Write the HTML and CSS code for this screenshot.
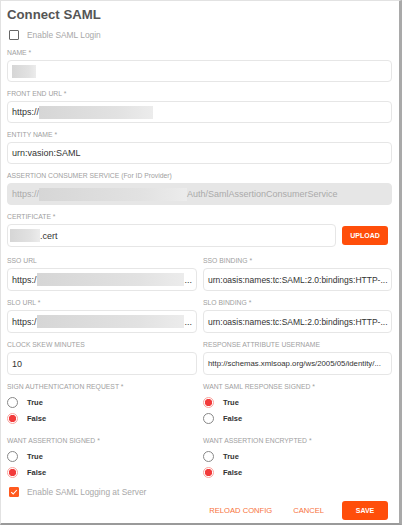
FILE: index.html
```html
<!DOCTYPE html>
<html lang="en">
<head>
  <meta charset="UTF-8" />
  <meta name="viewport" content="width=device-width, initial-scale=1" />
  <title>Connect SAML</title>
  <link rel="stylesheet" href="styles.css">
</head>
<body>
  <div class="dialog">
    <h1>Connect SAML</h1>

    <label class="check">
      <span class="box"></span>
      <span>Enable SAML Login</span>
    </label>

    <div class="field">
      <label>NAME *</label>
      <div class="input"><span class="mask" style="width:24px"></span></div>
    </div>

    <div class="field">
      <label>FRONT END URL *</label>
      <div class="input">https://<span class="mask" style="width:114px"></span></div>
    </div>

    <div class="field">
      <label>ENTITY NAME *</label>
      <div class="input">urn:vasion:SAML</div>
    </div>

    <div class="field">
      <label>ASSERTION CONSUMER SERVICE (For ID Provider)</label>
      <div class="input disabled">https://<span class="mask" style="width:148px"></span>Auth/SamlAssertionConsumerService</div>
    </div>

    <div class="field">
      <label>CERTIFICATE *</label>
      <div class="upload-row">
        <div class="input"><span class="mask" style="width:30px;margin-left:-2px"></span>.cert</div>
        <button class="btn">UPLOAD</button>
      </div>
    </div>

    <div class="grid">
      <div class="field">
        <label>SSO URL</label>
        <div class="input">https:/<span class="mask" style="width:150px"></span>...</div>
      </div>
      <div class="field">
        <label>SSO BINDING *</label>
        <div class="input binding">urn:oasis:names:tc:SAML:2.0:bindings:HTTP-...</div>
      </div>
      <div class="field">
        <label>SLO URL *</label>
        <div class="input">https:/<span class="mask" style="width:150px"></span>...</div>
      </div>
      <div class="field">
        <label>SLO BINDING *</label>
        <div class="input binding">urn:oasis:names:tc:SAML:2.0:bindings:HTTP-...</div>
      </div>
      <div class="field">
        <label>CLOCK SKEW MINUTES</label>
        <div class="input">10</div>
      </div>
      <div class="field">
        <label>RESPONSE ATTRIBUTE USERNAME</label>
        <div class="input small">http://schemas.xmlsoap.org/ws/2005/05/identity/...</div>
      </div>
    </div>

    <div class="grid radios">
      <div class="group">
        <label>SIGN AUTHENTICATION REQUEST *</label>
        <div class="radio"><span class="dot"></span>True</div>
        <div class="radio"><span class="dot on"></span>False</div>
      </div>
      <div class="group">
        <label>WANT SAML RESPONSE SIGNED *</label>
        <div class="radio"><span class="dot on"></span>True</div>
        <div class="radio"><span class="dot"></span>False</div>
      </div>
      <div class="group">
        <label>WANT ASSERTION SIGNED *</label>
        <div class="radio"><span class="dot"></span>True</div>
        <div class="radio"><span class="dot on"></span>False</div>
      </div>
      <div class="group">
        <label>WANT ASSERTION ENCRYPTED *</label>
        <div class="radio"><span class="dot"></span>True</div>
        <div class="radio"><span class="dot on"></span>False</div>
      </div>
    </div>

    <label class="check logging">
      <span class="box checked">
        <svg viewBox="0 0 10 10" width="8" height="8"><path d="M1.5 5.2 L4 7.5 L8.5 2.5" fill="none" stroke="#fff" stroke-width="1.4"/></svg>
      </span>
      <span>Enable SAML Logging at Server</span>
    </label>

    <div class="actions">
      <button class="link reload">RELOAD CONFIG</button>
      <button class="link">CANCEL</button>
      <button class="btn">SAVE</button>
    </div>
  </div>
</body>
</html>
```

FILE: styles.css
```css
body {
  margin: 0;
  font-family: "Liberation Sans", Arial, sans-serif;
  background: #fff;
}
.dialog {
  width: 385px;
  height: 522px;
  padding: 0 7px 0 6px;
  border-left: 1px solid #e2e2e2;
  border-top: 1px solid #e2e2e2;
  border-right: 3px solid #a9a9a9;
  border-bottom: 2px solid #9a9a9a;
}
h1 {
  margin: 0;
  padding-top: 5px;
  font-size: 13.2px;
  line-height: 18px;
  color: #555;
}
.check {
  display: flex;
  align-items: center;
  gap: 8px;
  margin: 5px 0 0 2px;
  font-size: 8.4px;
  color: #a8a8a8;
  height: 12px;
}
.box {
  width: 8px;
  height: 8px;
  border: 1.5px solid #666;
  border-radius: 1px;
  display: flex;
  align-items: center;
  justify-content: center;
}
.box.checked {
  background: #ff5a1f;
  border-color: #ff5a1f;
}
.field {
  margin-top: 7px;
}
.field label,
.group label {
  display: block;
  font-size: 6.8px;
  line-height: 10px;
  margin-bottom: 2px;
  color: #a0a0a0;
}
.input {
  height: 22px;
  box-sizing: border-box;
  border: 1px solid #e6e6e6;
  border-radius: 4px;
  padding: 0 4px;
  display: flex;
  align-items: center;
  font-size: 9px;
  color: #333;
  white-space: nowrap;
  overflow: hidden;
}
.input.disabled {
  background: #e6e6e6;
  color: #aaa;
}
.input.small {
  font-size: 7.8px;
}
.input.binding {
  font-size: 8.5px;
}
.mask {
  display: inline-block;
  height: 13px;
  background: linear-gradient(90deg, #d6d6d6, #e2e2e2 70%, #ececec);
}
.upload-row {
  display: flex;
  align-items: center;
  gap: 6px;
}
.upload-row .input {
  flex: 1;
  height: 23px;
}
.btn {
  border: none;
  border-radius: 3px;
  background: #ff4e0a;
  color: #fff;
  font-family: inherit;
  font-size: 7px;
  font-weight: bold;
  width: 46px;
  height: 19px;
  padding: 0;
  margin-right: 4px;
}
.grid {
  display: grid;
  grid-template-columns: 190px 189px;
  column-gap: 6px;
  margin-top: 2px;
}
.grid .field .input {
  height: 23px;
}
.radios {
  margin-top: 7px;
  row-gap: 10px;
}
.radio {
  display: flex;
  align-items: center;
  gap: 9px;
  height: 16px;
  font-size: 7.5px;
  font-weight: bold;
  color: #333;
}
.dot {
  width: 9px;
  height: 9px;
  border: 1px solid #888;
  border-radius: 50%;
  box-sizing: content-box;
}
.dot.on {
  border-color: #f9a5a0;
  background: radial-gradient(circle, #f23b3b 0 3.4px, #fff 3.9px);
}
.logging {
  margin-top: 6px;
}
.actions {
  display: flex;
  justify-content: flex-end;
  align-items: center;
  margin-top: 3px;
}
.link {
  border: none;
  background: none;
  font-family: inherit;
  font-size: 7.6px;
  color: #f7713c;
  padding: 0;
  margin-right: 18px;
}
.link.reload {
  margin-right: 21px;
}
```
